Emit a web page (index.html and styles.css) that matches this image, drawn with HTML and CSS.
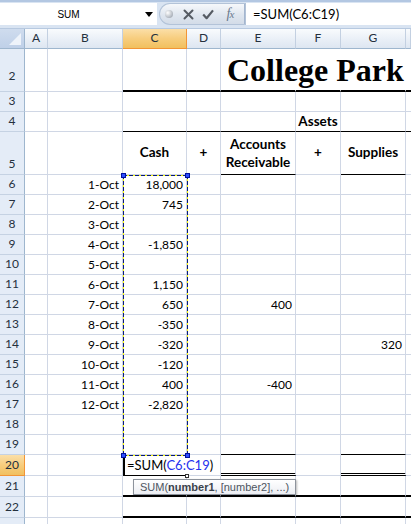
FILE: index.html
```html
<!DOCTYPE html>
<html>
<head>
<meta charset="utf-8">
<title>College Park</title>
<link rel="stylesheet" href="styles.css">
</head>
<body>
<div class="app">
  <div class="fbar">
    <div class="namebox">
      <span class="nb-text">SUM</span>
      <svg class="dd" width="8" height="5" viewBox="0 0 8 5"><path d="M0 0H8L4 5Z" fill="#000"/></svg>
    </div>
    <div class="pill">
      <span class="slot s-ball"><span class="ball"></span></span>
      <span class="slot s-x"><svg width="11" height="11" viewBox="0 0 11 11"><path d="M1.5 1.5L9.5 9.5M9.5 1.5L1.5 9.5" stroke="#555b63" stroke-width="2" stroke-linecap="round"/></svg></span>
      <span class="slot s-ok"><svg width="12" height="11" viewBox="0 0 12 11"><path d="M1.2 5.6L4.6 9.2L11 1.4" fill="none" stroke="#555b63" stroke-width="2.2" stroke-linejoin="round"/></svg></span>
      <span class="slot s-fx"><span class="fx">f<span class="fx-x">x</span></span></span>
    </div>
    <div class="formula">=SUM(C6:C19)</div>
  </div>

  <div class="sheet">
    <div class="row h20 hdr">
      <div class="corner"><svg width="12" height="12" viewBox="0 0 12 12"><path d="M12 0V12H0Z" fill="#eef3fa"/></svg></div>
      <div class="ch">A</div><div class="ch">B</div><div class="ch sel">C</div><div class="ch">D</div><div class="ch">E</div><div class="ch">F</div><div class="ch">G</div><div class="ch"></div>
    </div>

    <div class="row h43">
      <div class="rh rh2">2</div>
      <div class="c"></div><div class="c"></div><div class="c bt"></div><div class="c bt"></div>
      <div class="c bt ng"><span class="title">College Park</span></div>
      <div class="c bt ng"></div><div class="c bt ng"></div><div class="c bt ng"></div>
    </div>

    <div class="row h20">
      <div class="rh">3</div>
      <div class="c"></div><div class="c"></div><div class="c"></div><div class="c"></div><div class="c"></div><div class="c"></div><div class="c"></div><div class="c"></div>
    </div>

    <div class="row h20">
      <div class="rh">4</div>
      <div class="c"></div><div class="c"></div><div class="c bk"></div><div class="c bk"></div><div class="c bk"></div>
      <div class="c bk m b">Assets</div>
      <div class="c bk"></div><div class="c bk"></div>
    </div>

    <div class="row h43">
      <div class="rh">5</div>
      <div class="c"></div><div class="c"></div>
      <div class="c mid m b">Cash</div>
      <div class="c mid m b">+</div>
      <div class="c mid m b bk wrap">Accounts Receivable</div>
      <div class="c mid m b">+</div>
      <div class="c mid m b bk">Supplies</div>
      <div class="c"></div>
    </div>

    <div class="row h20"><div class="rh">6</div><div class="c"></div><div class="c r">1-Oct</div><div class="c r">18,000</div><div class="c"></div><div class="c"></div><div class="c"></div><div class="c"></div><div class="c"></div></div>
    <div class="row h20"><div class="rh">7</div><div class="c"></div><div class="c r">2-Oct</div><div class="c r">745</div><div class="c"></div><div class="c"></div><div class="c"></div><div class="c"></div><div class="c"></div></div>
    <div class="row h20"><div class="rh">8</div><div class="c"></div><div class="c r">3-Oct</div><div class="c r"></div><div class="c"></div><div class="c"></div><div class="c"></div><div class="c"></div><div class="c"></div></div>
    <div class="row h20"><div class="rh">9</div><div class="c"></div><div class="c r">4-Oct</div><div class="c r">-1,850</div><div class="c"></div><div class="c"></div><div class="c"></div><div class="c"></div><div class="c"></div></div>
    <div class="row h20"><div class="rh">10</div><div class="c"></div><div class="c r">5-Oct</div><div class="c r"></div><div class="c"></div><div class="c"></div><div class="c"></div><div class="c"></div><div class="c"></div></div>
    <div class="row h20"><div class="rh">11</div><div class="c"></div><div class="c r">6-Oct</div><div class="c r">1,150</div><div class="c"></div><div class="c"></div><div class="c"></div><div class="c"></div><div class="c"></div></div>
    <div class="row h20"><div class="rh">12</div><div class="c"></div><div class="c r">7-Oct</div><div class="c r">650</div><div class="c"></div><div class="c r">400</div><div class="c"></div><div class="c"></div><div class="c"></div></div>
    <div class="row h20"><div class="rh">13</div><div class="c"></div><div class="c r">8-Oct</div><div class="c r">-350</div><div class="c"></div><div class="c"></div><div class="c"></div><div class="c"></div><div class="c"></div></div>
    <div class="row h20"><div class="rh">14</div><div class="c"></div><div class="c r">9-Oct</div><div class="c r">-320</div><div class="c"></div><div class="c"></div><div class="c"></div><div class="c r">320</div><div class="c"></div></div>
    <div class="row h20"><div class="rh">15</div><div class="c"></div><div class="c r">10-Oct</div><div class="c r">-120</div><div class="c"></div><div class="c"></div><div class="c"></div><div class="c"></div><div class="c"></div></div>
    <div class="row h20"><div class="rh">16</div><div class="c"></div><div class="c r">11-Oct</div><div class="c r">400</div><div class="c"></div><div class="c r">-400</div><div class="c"></div><div class="c"></div><div class="c"></div></div>
    <div class="row h20"><div class="rh">17</div><div class="c"></div><div class="c r">12-Oct</div><div class="c r">-2,820</div><div class="c"></div><div class="c"></div><div class="c"></div><div class="c"></div><div class="c"></div></div>
    <div class="row h20"><div class="rh">18</div><div class="c"></div><div class="c"></div><div class="c"></div><div class="c"></div><div class="c"></div><div class="c"></div><div class="c"></div><div class="c"></div></div>
    <div class="row h20"><div class="rh">19</div><div class="c"></div><div class="c"></div><div class="c"></div><div class="c"></div><div class="c bk"></div><div class="c"></div><div class="c bk"></div><div class="c"></div></div>

    <div class="row h21">
      <div class="rh sel">20</div>
      <div class="c"></div><div class="c"></div>
      <div class="c edit"><span class="ed-text">=SUM(<span class="ref">C6:C19</span>)</span></div>
      <div class="c"></div><div class="c bd"></div><div class="c"></div><div class="c bd"></div><div class="c"></div>
    </div>
    <div class="row h21">
      <div class="rh">21</div>
      <div class="c"></div><div class="c"></div><div class="c bt"></div><div class="c bt"></div><div class="c bt"></div><div class="c bt"></div><div class="c bt"></div><div class="c bt"></div>
    </div>
    <div class="row h21">
      <div class="rh">22</div>
      <div class="c"></div><div class="c"></div><div class="c bt"></div><div class="c bt"></div><div class="c bt"></div><div class="c bt"></div><div class="c bt"></div><div class="c bt"></div>
    </div>
    <div class="row h20">
      <div class="rh"></div>
      <div class="c"></div><div class="c"></div><div class="c"></div><div class="c"></div><div class="c"></div><div class="c"></div><div class="c"></div><div class="c"></div>
    </div>

    <div class="marquee">
      <span class="hd tl"></span><span class="hd tr"></span><span class="hd bl"></span><span class="hd br"></span>
    </div>
    <div class="fill-handle"></div>
    <div class="tip">SUM(<b>number1</b>, [number2], ...)</div>
  </div>
</div>
</body>
</html>
```

FILE: styles.css
```css
* { box-sizing: border-box; }
html, body { margin: 0; padding: 0; background: #fff; overflow: hidden; }
body { font-family: Lato, "Liberation Sans", sans-serif; color: #000; }

.app { width: 411px; height: 524px; overflow: hidden; }

/* ---------- formula bar ---------- */
.fbar {
  height: 29px;
  display: flex;
  align-items: flex-start;
  padding-top: 1px;
  background: #d9e4f2;
  border-top: 2px solid #b3c7e2;
  border-bottom: 1px solid #b7c9e0;
}
.namebox {
  width: 157px;
  height: 22px;
  background: #fff;
  display: flex;
  align-items: center;
}
.nb-text {
  width: 137px;
  text-align: center;
  font: 10px "Liberation Sans", Arial, sans-serif;
  color: #000;
}
.dd { margin-left: 8px; }

.pill {
  width: 86px;
  height: 22px;
  margin-left: 2px;
  display: flex;
  align-items: center;
  border: 1px solid #b3c3d8;
  border-right-color: #a4b6cf;
  border-radius: 11px 0 0 11px;
  background: linear-gradient(#f6f8fb, #dfe6ef 55%, #d3dce8);
}
.slot { display: flex; align-items: center; justify-content: center; height: 20px; }
.s-ball { width: 18px; }
.s-x { width: 20px; }
.s-ok { width: 20px; }
.s-fx { width: 24px; }
.ball {
  width: 8px; height: 8px; border-radius: 50%;
  background: radial-gradient(circle at 35% 35%, #ffffff, #b9bfc7 60%, #8e959e);
}
.fx {
  font: italic 14px "Liberation Serif", "DejaVu Serif", serif;
  color: #6a7a8e;
  letter-spacing: -1px;
}
.fx-x { font-size: 11px; }

.formula {
  flex: 1;
  height: 22px;
  background: #fff;
  padding-left: 7px;
  font: 13px Lato, "Liberation Sans", sans-serif;
  line-height: 22px;
  color: #000;
  border-left: 1px solid #b3c3d8;
}

/* ---------- sheet ---------- */
.sheet { position: relative; }

.row {
  display: grid;
  grid-template-columns: 25px 23px 75px 64px 34px 75px 45px 65px 5px;
}
.h20 { height: 20px; }
.h21 { height: 21px; }
.h43 { height: 43px; }

.corner {
  background: linear-gradient(#cfdcee, #bfd0e8);
  border-right: 1px solid #9eb6ce;
  border-bottom: 1px solid #9eb6ce;
  display: flex;
  align-items: flex-end;
  justify-content: flex-end;
  padding: 0 3px 3px 0;
}
.ch {
  background: linear-gradient(#f9fbfd, #e8eef6 60%, #dde6f1);
  border-right: 1px solid #c3d0e1;
  border-bottom: 1px solid #9eb6ce;
  font-size: 12px;
  color: #24303d;
  display: flex;
  align-items: flex-end;
  justify-content: center;
  padding-bottom: 3px;
  line-height: 14px;
}
.ch.sel, .rh.sel {
  background: linear-gradient(#fbdfa8, #f7cd7e 50%, #f1c05f);
  border-right-color: #f29536;
  border-bottom-color: #f29536;
}
.rh {
  background: #e4ecf7;
  border-right: 1px solid #9eb6ce;
  border-bottom: 1px solid #c5d2e3;
  font-size: 12px;
  color: #24303d;
  display: flex;
  align-items: flex-end;
  justify-content: center;
  padding-bottom: 3px;
  line-height: 14px;
}
.rh2 { padding-bottom: 8px; }

.c {
  min-width: 0;
  border-right: 1px solid #d0d7e5;
  border-bottom: 1px solid #d0d7e5;
  display: flex;
  align-items: flex-end;
  padding: 0 3px 2px;
  font-size: 12px;
  line-height: 15px;
  white-space: nowrap;
}
.r { justify-content: flex-end; }
.m { justify-content: center; text-align: center; }
.b { font-weight: 700; font-size: 13.5px; }
.mid { align-items: center; padding-bottom: 1px; }
.wrap { white-space: normal; line-height: 18px; padding: 0 1px; }

.bt { border-bottom: 2px solid #000; }
.bk { border-bottom: 1px solid #000; }
.bd { border-bottom: 3px double #000; }
.ng { border-right-color: transparent; }

.title {
  font: 700 32px "Liberation Serif", "Times New Roman", serif;
  line-height: 32px;
  padding-left: 3px;
  padding-bottom: 2px;
  overflow: visible;
}

.edit {
  border-left: 2px solid #000;
  border-bottom: 1px solid #000;
  border-right-color: transparent;
  padding-left: 2px;
  overflow: visible;
}
.ed-text { font-size: 13px; line-height: 16px; }
.ref { color: #2330ee; }

/* marching-ants reference box C6:C19 */
.marquee {
  position: absolute;
  left: 123px;
  top: 146px;
  width: 65px;
  height: 281px;
  background:
    repeating-linear-gradient(90deg, #0a1a7a 0 4px, #ffff00 4px 6px) top / 100% 1px no-repeat,
    repeating-linear-gradient(90deg, #0a1a7a 0 4px, #ffff00 4px 6px) bottom / 100% 1px no-repeat,
    repeating-linear-gradient(180deg, #0a1a7a 0 4px, #ffff00 4px 6px) left / 1px 100% no-repeat,
    repeating-linear-gradient(180deg, #0a1a7a 0 4px, #ffff00 4px 6px) right / 1px 100% no-repeat;
}
.hd {
  position: absolute;
  width: 5px;
  height: 5px;
  background: #2e4dff;
  border: 1px solid #0010a0;
}
.tl { left: -2px; top: -2px; }
.tr { right: -2px; top: -2px; }
.bl { left: -2px; bottom: -2px; }
.br { right: -2px; bottom: -2px; }

.fill-handle {
  position: absolute;
  left: 185px;
  top: 445px;
  width: 4px;
  height: 4px;
  background: #fff;
  border: 1px solid #333;
}

.tip {
  position: absolute;
  left: 133px;
  top: 450px;
  width: 163px;
  height: 16px;
  padding-left: 6px;
  background: linear-gradient(#ffffff, #eceef3);
  border: 1px solid #8d939c;
  box-shadow: 1px 1px 2px rgba(0, 0, 0, 0.28);
  font: 11px "Liberation Sans", Arial, sans-serif;
  line-height: 14px;
  color: #4d5560;
  white-space: nowrap;
}
.tip b { color: #3b424b; }
```
